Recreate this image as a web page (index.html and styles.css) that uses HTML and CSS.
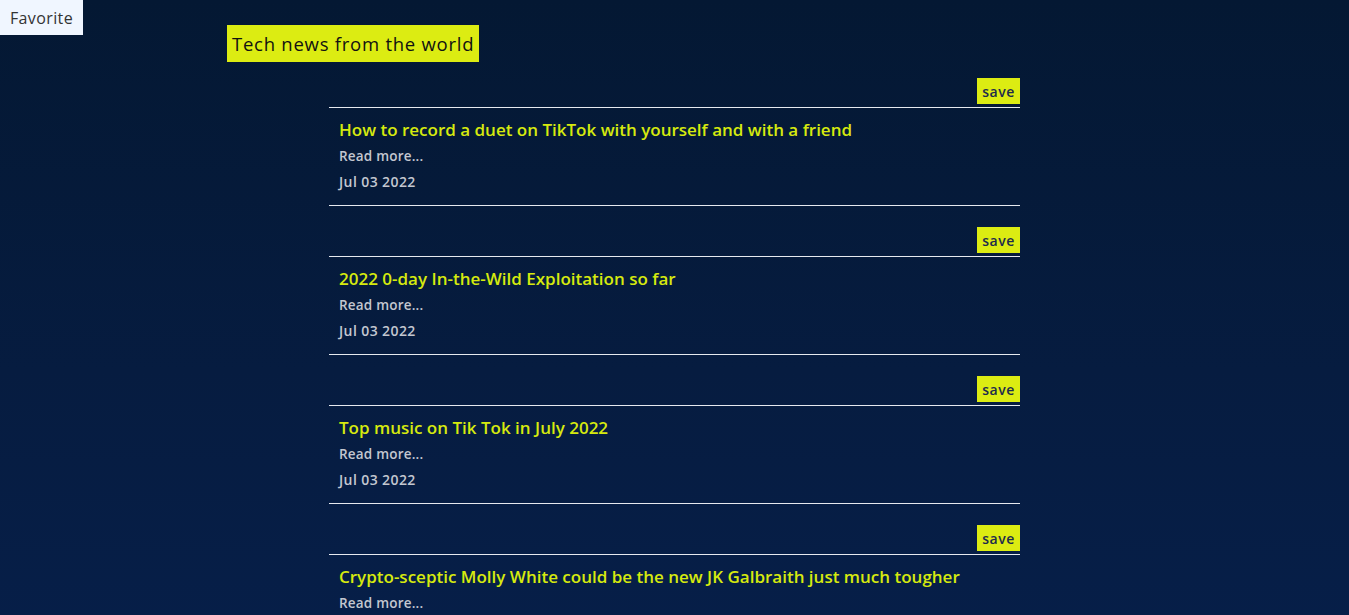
FILE: index.html
```html
<!DOCTYPE html>
<html lang="en">
<head>
<meta charset="utf-8">
<title>Tech news</title>
<link rel="stylesheet" href="styles.css">
</head>
<body>
<button class="fav-btn">Favorite</button>
<main class="page">
  <h1 class="page-title">Tech news from the world</h1>
  <section class="news-list">
    <div class="news-item">
      <div class="save-row"><button class="save-btn">save</button></div>
      <article class="news-card">
        <h2 class="news-title">How to record a duet on TikTok with yourself and with a friend</h2>
        <a class="read-more" href="#">Read more...</a>
        <p class="news-date">Jul 03 2022</p>
      </article>
    </div>
    <div class="news-item">
      <div class="save-row"><button class="save-btn">save</button></div>
      <article class="news-card">
        <h2 class="news-title">2022 0-day In-the-Wild Exploitation so far</h2>
        <a class="read-more" href="#">Read more...</a>
        <p class="news-date">Jul 03 2022</p>
      </article>
    </div>
    <div class="news-item">
      <div class="save-row"><button class="save-btn">save</button></div>
      <article class="news-card">
        <h2 class="news-title">Top music on Tik Tok in July 2022</h2>
        <a class="read-more" href="#">Read more...</a>
        <p class="news-date">Jul 03 2022</p>
      </article>
    </div>
    <div class="news-item">
      <div class="save-row"><button class="save-btn">save</button></div>
      <article class="news-card">
        <h2 class="news-title">Crypto-sceptic Molly White could be the new JK Galbraith just much tougher</h2>
        <a class="read-more" href="#">Read more...</a>
        <p class="news-date">Jul 03 2022</p>
      </article>
    </div>
  </section>
</main>
</body>
</html>
```

FILE: styles.css
```css
html, body {
  margin: 0;
  padding: 0;
}
body {
  min-height: 615px;
  background: linear-gradient(180deg, #041833 0%, #061c40 55%, #061f4a 100%);
  font-family: "Open Sans", "Liberation Sans", sans-serif;
  overflow: hidden;
}
.fav-btn {
  display: block;
  width: 83px;
  height: 35px;
  margin: 0;
  padding: 0;
  border: none;
  background: #f0f6ff;
  color: #333;
  font-family: inherit;
  font-size: 16px;
  letter-spacing: 0.4px;
}
.page {
  width: 895px;
  margin: -10px auto 0;
}
.page-title {
  display: inline-block;
  margin: 0;
  padding: 0 5px;
  height: 37px;
  line-height: 37px;
  background: #dcec12;
  color: #111;
  font-size: 18.5px;
  font-weight: 500;
  letter-spacing: 0.75px;
}
.news-list {
  width: 691px;
  margin: 16px auto 0;
}
.news-item {
  margin-bottom: 21px;
}
.save-row {
  display: flex;
  justify-content: flex-end;
  margin-bottom: 3px;
}
.save-btn {
  width: 43px;
  height: 26px;
  margin: 0;
  padding: 0;
  border: none;
  background: #dcec12;
  color: #1c2b4d;
  font-family: inherit;
  font-size: 14px;
  font-weight: 600;
  letter-spacing: 0.5px;
}
.news-card {
  height: 97px;
  border-top: 1px solid #e6e9ef;
  border-bottom: 1px solid #e6e9ef;
  padding: 0 10px;
  display: flex;
  flex-direction: column;
}
.news-title {
  margin: 11px 0 0;
  height: 22px;
  line-height: 22px;
  color: #d6ea0e;
  font-size: 17px;
  font-weight: 600;
}
.read-more {
  margin-top: 6px;
  height: 18px;
  line-height: 18px;
  color: #c3c7d0;
  font-size: 13.5px;
  font-weight: 600;
  letter-spacing: 0.2px;
  text-decoration: none;
}
.news-date {
  margin: 8px 0 0;
  height: 18px;
  line-height: 18px;
  color: #c3c7d0;
  font-size: 14px;
  font-weight: 600;
  letter-spacing: 0.4px;
}
```
